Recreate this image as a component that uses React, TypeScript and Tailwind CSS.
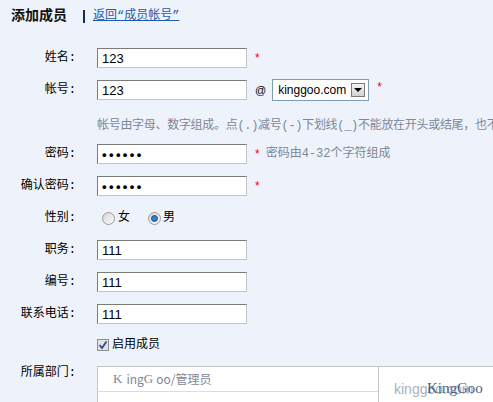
import React from "react";

function Field({children}: {children?: React.ReactNode}) {
    return (
        <div className="flex h-[20px] w-[150px] shrink-0 items-center border border-t-[#7b7b7b] border-l-[#7b7b7b] border-r-[#c4c4c4] border-b-[#c4c4c4] bg-white pl-[4px] font-['Liberation_Sans',Arial,sans-serif] text-[13px] leading-none text-black">
            {children}
        </div>
    );
}

function Star({className = ""}: {className?: string}) {
    return <span className={`ml-[8px] font-['Liberation_Sans',Arial,sans-serif] text-[12px] leading-none text-[#f00] ${className}`}>*</span>;
}

function Row({label, children, className = "h-[32px]"}: {label?: string; children: React.ReactNode; className?: string}) {
    return (
        <div className={`flex items-center ${className}`}>
            <div className="w-[76px] shrink-0 text-right">{label}</div>
            <div className="ml-[21px] flex shrink-0 items-center whitespace-nowrap">{children}</div>
        </div>
    );
}

function Radio({checked}: {checked?: boolean}) {
    return (
        <span className="flex h-[13px] w-[13px] items-center justify-center rounded-full border border-[#9c9c9c] bg-gradient-to-br from-[#d6d6d6] to-[#fbfbfb]">
            {checked ? <span className="h-[7px] w-[7px] rounded-full border border-[#1c4f8c] bg-[#2f7fd0]" /> : null}
        </span>
    );
}

export default function App() {
    return (
        <div className="relative h-[402px] w-[493px] overflow-hidden bg-[#eef3fb] font-['Liberation_Mono','Noto_Sans_CJK_SC',monospace] text-[12px] leading-[16px] text-black">
            <div className="flex h-[32px] items-center pl-[11px]">
                <span className="text-[14px] font-bold leading-none text-[#111]">添加成员</span>
                <span className="ml-[16px] h-[13px] w-[2px] bg-[#1b2a52]" />
                <a href="#" className="ml-[8px] text-[#1d5cad] underline">返回“成员帐号”</a>
            </div>

            <div className="mt-[10px]">
                <Row label="姓名:">
                    <Field>123</Field>
                    <Star />
                </Row>
                <Row label="帐号:">
                    <Field>123</Field>
                    <span className="ml-[8px] font-['Liberation_Sans',Arial,sans-serif] text-[11px]">@</span>
                    <div className="ml-[6px] flex h-[22px] w-[97px] items-center justify-between border border-[#7f9db9] bg-white pl-[5px] pr-[3px] font-['Liberation_Sans',Arial,sans-serif] text-[12px] leading-none">
                        <span>kinggoo.com</span>
                        <span className="flex h-[14px] w-[14px] items-center justify-center border border-[#7a7a7a] bg-gradient-to-b from-[#f4f4f4] to-[#d2d2d2]">
                            <span className="h-0 w-0 border-x-[4px] border-t-[4px] border-x-transparent border-t-black" />
                        </span>
                    </div>
                    <Star className="-translate-y-[3px]" />
                </Row>
                <Row className="h-[32px] items-start pt-[12px]">
                    <span className="tracking-[-0.3px] text-[#7c8799]">帐号由字母、数字组成。点(.)减号(-)下划线(_)不能放在开头或结尾，也不能连续出现</span>
                </Row>
                <Row label="密码:">
                    <Field><span className="font-bold tracking-[2.4px]">••••••</span></Field>
                    <Star />
                    <span className="ml-[6px] text-[#7c8799]">密码由4-32个字符组成</span>
                </Row>
                <Row label="确认密码:">
                    <Field><span className="font-bold tracking-[2.4px]">••••••</span></Field>
                    <Star />
                </Row>
                <Row label="性别:">
                    <span className="ml-[5px]"><Radio /></span>
                    <span className="ml-[3px]">女</span>
                    <span className="ml-[18px]"><Radio checked /></span>
                    <span className="ml-[2px]">男</span>
                </Row>
                <Row label="职务:">
                    <Field>111</Field>
                </Row>
                <Row label="编号:">
                    <Field>111</Field>
                </Row>
                <Row label="联系电话:">
                    <Field>111</Field>
                </Row>
                <Row className="h-[30px]">
                    <span className="flex h-[12px] w-[12px] items-center justify-center border border-[#8c8c8c] bg-[#e2e2e2]">
                        <svg width="10" height="10" viewBox="0 0 10 10">
                            <path d="M1.5 5 L4 8 L8.5 1.5" fill="none" stroke="#2b4a9a" strokeWidth="1.8" />
                        </svg>
                    </span>
                    <span className="ml-[3px]">启用成员</span>
                </Row>

                <div className="mt-[6px] flex items-start">
                    <div className="w-[76px] shrink-0 text-right leading-[14px]">所属部门:</div>
                    <div className="ml-[21px] flex h-[60px] flex-1 border-l border-t border-[#c6c6c6] bg-white">
                        <div className="w-[281px] shrink-0 border-r border-[#c6c6c6]">
                            <div className="flex h-[25px] items-center border-b border-[#dcdcdc] pl-[15px] font-['Noto_Sans_CJK_SC',sans-serif] text-[#7c8799]">
                                <span className="font-['Liberation_Serif',serif] text-[13px]">K</span>
                                <span className="ml-[4px]">ing</span>
                                <span className="font-['Liberation_Serif',serif] text-[13px]">G</span>
                                <span className="ml-[3px]">oo/管理员</span>
                            </div>
                        </div>
                        <div className="relative flex-1">
                            <span className="absolute left-[15px] top-[14px] font-['Liberation_Sans',Arial,sans-serif] text-[14px] text-[#a9b0bb]">kinggoo.com</span>
                            <span className="absolute left-[48px] top-[13px] font-['Liberation_Serif',serif] text-[15px] text-[#4f5f86]">KingGoo</span>
                        </div>
                    </div>
                </div>
            </div>
        </div>
    );
}
